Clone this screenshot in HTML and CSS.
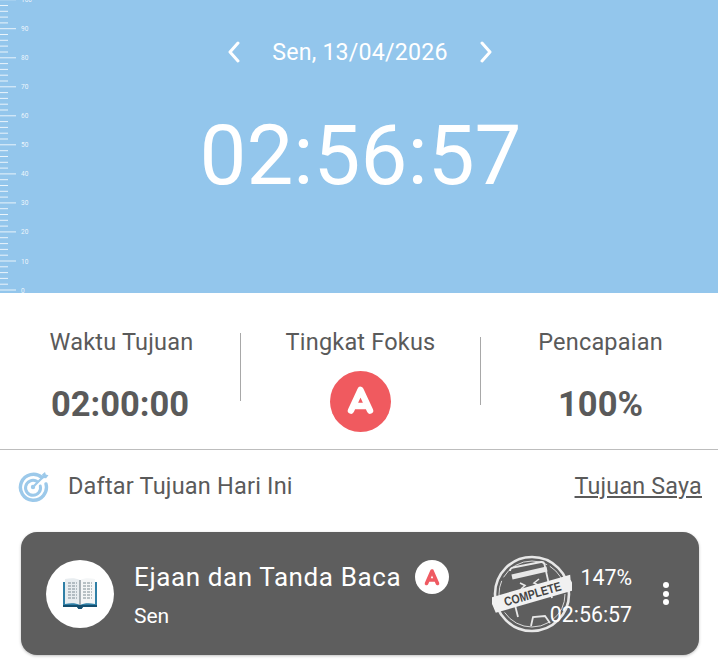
FILE: index.html
```html
<!DOCTYPE html>
<html lang="id">
<head>
<meta charset="utf-8">
<title>Tujuan</title>
<link rel="stylesheet" href="styles.css">
</head>
<body>
<header class="hero">
  <svg class="ruler" width="100" height="293" viewBox="0 0 100 293" id="ruler"></svg>
  <div class="date-row">
    <svg class="chev" width="14" height="22" viewBox="0 0 14 22"><path d="M11 2 3 11l8 9"/></svg>
    <span class="date">Sen, 13/04/2026</span>
    <svg class="chev" width="14" height="22" viewBox="0 0 14 22"><path d="M3 2l8 9-8 9"/></svg>
  </div>
  <div class="clock">02:56:57</div>
</header>

<section class="stats">
  <div class="stat stat-a">
    <div class="stat-label">Waktu Tujuan</div>
    <div class="stat-value value-a">02:00:00</div>
  </div>
  <div class="rule rule-a"></div>
  <div class="stat">
    <div class="stat-label">Tingkat Fokus</div>
    <svg class="grade" width="61" height="61" viewBox="0 0 61 61">
      <circle cx="30.500" cy="30.500" r="30.500" fill="#f05a5f"/>
      <path d="M21 39.500 30.500 19 40 39.500M24.500 35h12" fill="none" stroke="#fff" stroke-width="6.500" stroke-linecap="round" stroke-linejoin="round"/>
    </svg>
  </div>
  <div class="rule rule-b"></div>
  <div class="stat stat-c">
    <div class="stat-label">Pencapaian</div>
    <div class="stat-value">100%</div>
  </div>
</section>

<section class="list-head">
  <svg class="target" width="32" height="32" viewBox="0 0 32 32" fill="none" stroke="#9cc9ea">
    <path d="M24 7.500A13 13 0 1 0 28 14" stroke-width="3.400" stroke-linecap="round"/>
    <path d="M18.500 11.200A7.500 7.500 0 1 0 22.300 16" stroke-width="3" stroke-linecap="round"/>
    <circle cx="15" cy="17" r="2.200" fill="#9cc9ea" stroke="none"/>
    <path d="M15 17 26 6" stroke-width="2.200" stroke-linecap="round"/>
    <path d="M24 4.500l3 -2.500.8 2.600 2.700.7-2.400 3-3-.4z" fill="#9cc9ea" stroke="none"/>
  </svg>
  <span class="list-title">Daftar Tujuan Hari Ini</span>
  <a class="list-link">Tujuan Saya</a>
</section>

<article class="card">
  <div class="avatar">
    <svg width="36" height="36" viewBox="0 0 36 36">
      <path d="M1 6h34v25H21l-1.500 2h-3L15 31H1z" fill="#2f7fa6"/>
      <path d="M1 29h34v2H21l-1.500 2h-3L15 31H1z" fill="#144f70"/>
      <path d="M3 3c6-1.400 11-1 15 1v25c-4-2-9-2.400-15-1z" fill="#e8edf0"/>
      <path d="M33 3c-6-1.400-11-1-15 1v25c4-2 9-2.400 15-1z" fill="#f4f6f7"/>
      <path d="M6 7h9M6 10h9M6 13h9M6 16h9M6 19h9M6 22h9M21 7h9M21 10h9M21 13h9M21 16h9M21 19h9M21 22h9" stroke="#7d8b94" stroke-width="1.100" stroke-dasharray="3 1"/>
      <path d="M18 4v25" stroke="#8a979e" stroke-width="1.400"/>
    </svg>
  </div>
  <div class="card-main">
    <div class="card-title-row">
      <span class="card-title">Ejaan dan Tanda Baca</span>
      <svg class="mini-grade" width="34" height="34" viewBox="0 0 34 34">
        <circle cx="17" cy="17" r="17" fill="#fff"/>
        <path d="M11.500 23.500 17 11l5.500 12.500M13.500 20h7" fill="none" stroke="#ef5a62" stroke-width="3.600" stroke-linecap="round" stroke-linejoin="round"/>
      </svg>
    </div>
    <div class="card-sub">Sen</div>
  </div>
  <div class="card-side">
    <svg class="stamp" width="80" height="80" viewBox="0 0 80 80" fill="none" stroke="#e8e8e8">
      <circle cx="40" cy="40" r="37" stroke-width="2.600"/>
      <circle cx="40" cy="40" r="33" stroke-width=".9" stroke-dasharray="30 4 50 3"/>
      <path d="M18 17c0-2 1-3 3-3.500L49 8c2-.4 3 .5 3.500 2.500L60 44M22 47l4 16" stroke-width="1.800"/>
      <path d="M20 23 55 15" stroke-width="5"/>
      <path d="M28 29l5 2.500-4 3.500M47 25l-5 4 5 2.500" stroke-width="1.600"/>
      <path d="M33 39l10-2" stroke-width="3" stroke-dasharray="3 2"/>
      <path d="M39 72l2-9 12-1 5 7" stroke-width="1.800"/>
      <g transform="rotate(-16 40 40)">
        <path d="M-2 32h84l-1 5 1 5-2 6H0l-1-8z" fill="#f1f1f1" stroke="none"/>
        <text x="13" y="44.500" class="stamp-text" transform="scale(.85 1)">COMPLETE</text>
      </g>
    </svg>
    <div class="card-nums">
      <span>147%</span>
      <span>02:56:57</span>
    </div>
  </div>
  <div class="dots"><i></i><i></i><i></i></div>
</article>

<script src="ruler.js"></script>
</body>
</html>
```

FILE: ruler.js
```js
var svg = document.getElementById('ruler');
var out = '';
for (var v = 0; v <= 100; v += 2) {
  var y = (290 - v * 2.903).toFixed(1);
  var major = v % 10 === 0;
  out += '<line class="tick" x1="0" x2="' + (major ? 16 : 8) + '" y1="' + y + '" y2="' + y + '"/>';
  if (major) {
    out += '<text class="tick-label" x="21" y="' + (+y + 2.5) + '">' + v + '</text>';
  }
}
svg.innerHTML = out;
```

FILE: styles.css
```css
* { box-sizing: border-box; }
html, body { margin: 0; padding: 0; }
body {
  width: 718px;
  height: 663px;
  overflow: hidden;
  background: #fff;
  font-family: Roboto, "Liberation Sans", sans-serif;
  color: #5a5a5a;
}
.hero {
  position: relative;
  height: 293px;
  background: #93c6ec;
  color: #fff;
  display: flex;
  flex-direction: column;
  align-items: center;
  padding-top: 35px;
  overflow: hidden;
}
.ruler { position: absolute; left: 0; top: 0; }
.tick { stroke: #fff; stroke-width: 1; stroke-opacity: .8; }
.tick-label { font-size: 6.500px; fill: #fff; fill-opacity: .85; font-family: Roboto, sans-serif; }
.date-row {
  display: flex;
  align-items: center;
  gap: 31px;
  height: 34px;
  padding-left: 2px;
}
.chev { fill: none; stroke: #fff; stroke-width: 3; stroke-linecap: round; stroke-linejoin: round; }
.date { font-size: 23.200px; font-weight: 400; letter-spacing: .2px; }
.clock {
  font-size: 83.500px;
  font-weight: 400;
  line-height: 100px;
  margin-top: 37px;
  padding-left: 3px;
}
.stats {
  height: 157px;
  border-bottom: 1px solid #bdbdbd;
  display: grid;
  grid-template-columns: 240px 1px 239px 1px 237px;
  align-items: start;
}
.stat {
  display: flex;
  flex-direction: column;
  align-items: center;
  padding-top: 34px;
}
.stat-a { padding-left: 3px; }
.stat-c { padding-left: 2px; }
.rule { width: 1px; height: 68px; background: #a8a8a8; }
.rule-a { margin-top: 40px; }
.rule-b { margin-top: 44px; }
.stat-label { font-size: 23.500px; line-height: 30px; letter-spacing: .2px; }
.stat-value { font-size: 34.500px; font-weight: 700; line-height: 40px; margin-top: 27px; }
.value-a { margin-right: 3px; }
.grade { margin-top: 14px; }
.list-head {
  display: flex;
  align-items: center;
  height: 72px;
  padding: 0 16px 0 18px;
}
.target { margin-right: 18px; }
.list-title { font-size: 23.500px; letter-spacing: .2px; }
.list-link { margin-left: auto; font-size: 23.300px; letter-spacing: .2px; text-decoration: underline; }
.card {
  margin: 10px 19px 0 21px;
  height: 123px;
  background: #5e5e5e;
  border-radius: 16px;
  box-shadow: 0 1px 3px rgba(0,0,0,.25);
  display: flex;
  align-items: center;
  padding: 0 30px 0 25px;
  color: #fff;
}
.avatar {
  width: 68px;
  height: 68px;
  flex: none;
  border-radius: 50%;
  background: #fff;
  display: flex;
  align-items: center;
  justify-content: center;
}
.card-main { margin-left: 20px; flex: 1; }
.card-title-row { display: flex; align-items: center; gap: 14px; }
.card-title { font-size: 26px; letter-spacing: .6px; }
.card-sub { font-size: 21px; margin-top: 10px; }
.card-side { position: relative; width: 140px; height: 80px; display: flex; align-items: center; }
.stamp { flex: none; }
.stamp-text { font-family: "Liberation Sans", sans-serif; font-weight: 700; font-size: 12.500px; fill: #444; stroke: none; }
.card-nums {
  position: absolute;
  right: 0;
  top: 0;
  bottom: 0;
  display: flex;
  flex-direction: column;
  align-items: flex-end;
  justify-content: center;
  gap: 11px;
  padding-top: 6px;
  font-size: 21.300px;
  line-height: 26px;
}
.dots { display: flex; flex-direction: column; gap: 2.500px; margin-left: 31px; }
.dots i { display: block; width: 6px; height: 6px; border-radius: 50%; background: #fff; }
```
